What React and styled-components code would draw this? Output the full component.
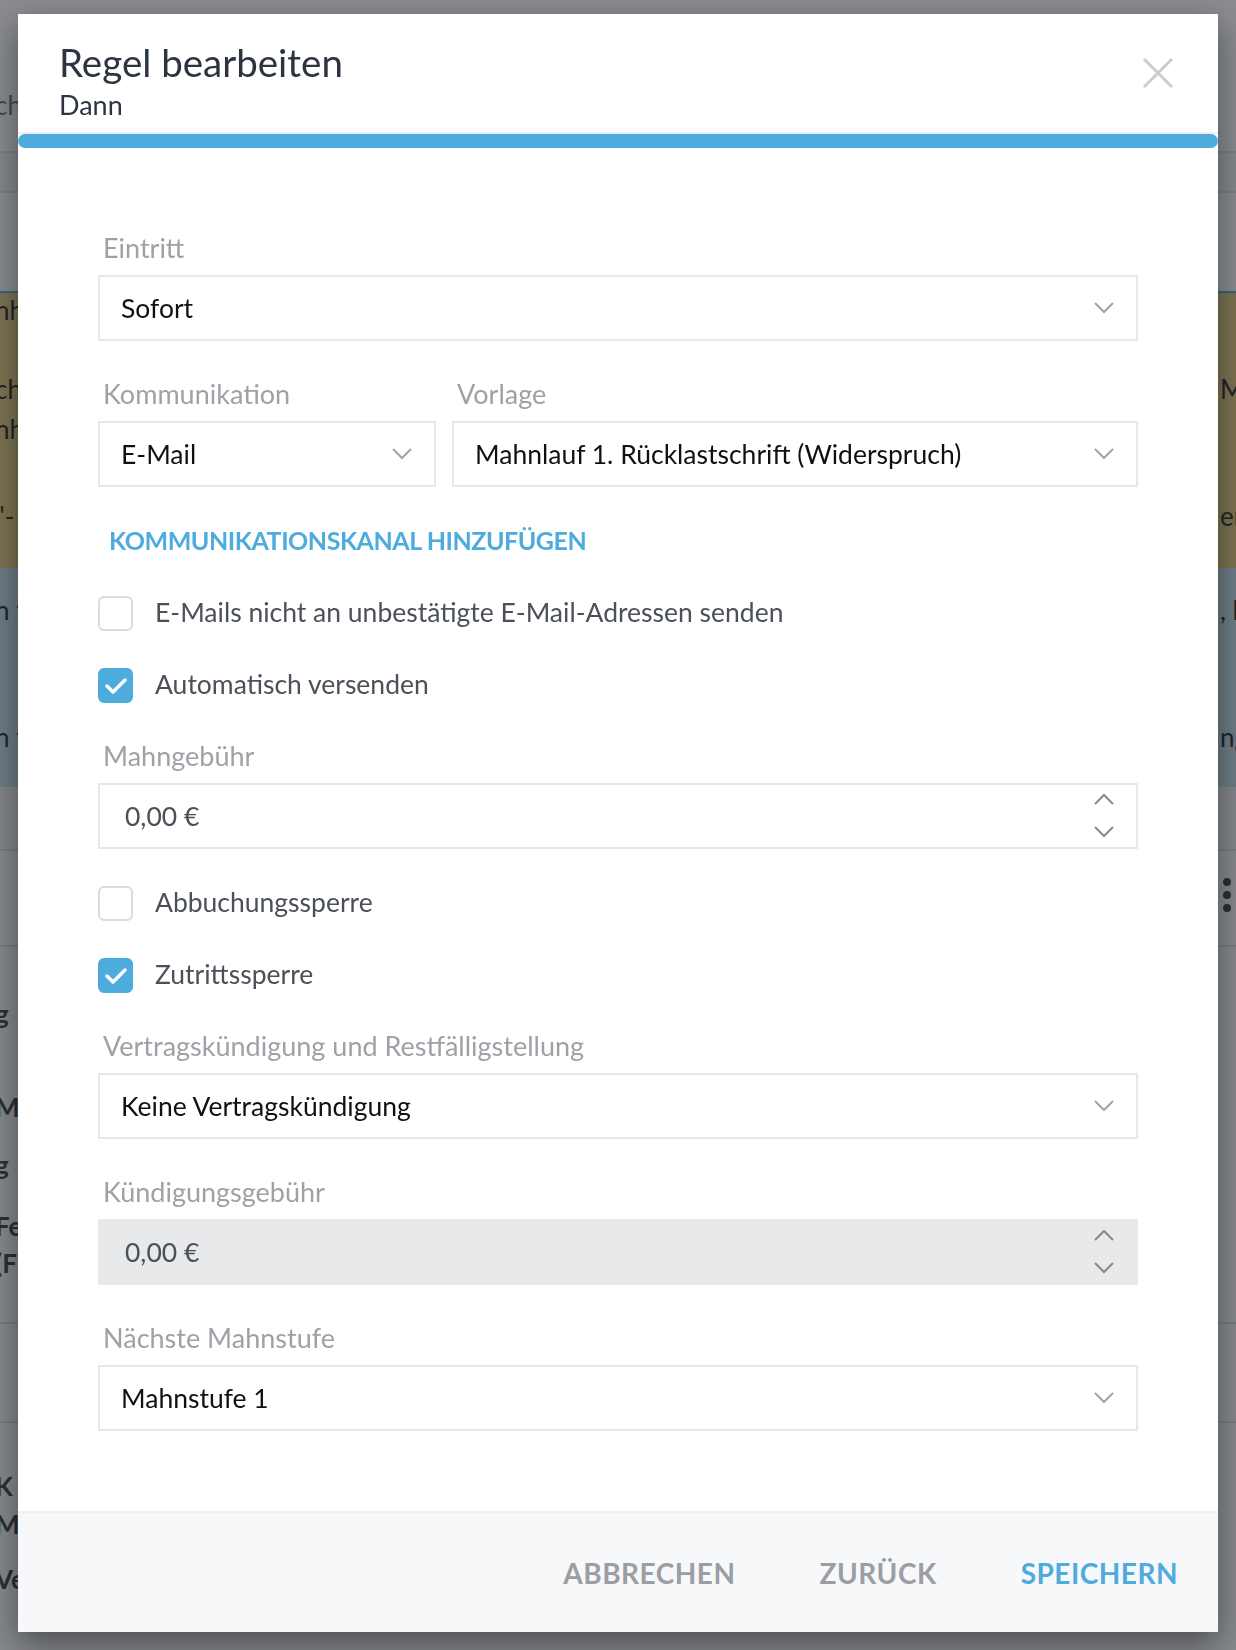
import React from "react";
import styled, { createGlobalStyle } from "styled-components";

const FONT = `"Lato", "Noto Sans", "Liberation Sans", sans-serif`;
const BLUE = "#4eabde";

const GlobalStyle = createGlobalStyle`
  html, body { margin: 0; padding: 0; width: 1236px; height: 1650px; overflow: hidden; }
  body { font-family: ${FONT}; background: #f6f7f9; }
  * { box-sizing: border-box; }
`;

/* ---------- background page (dimmed behind the modal) ---------- */
const BgPage = styled.div`
  width: 1236px;
  height: 1650px;
  display: flex;
  flex-direction: column;
  overflow: hidden;
`;

const BgSection = styled.section`
  flex: 0 0 ${(p) => p.$h}px;
  background: ${(p) => p.$bg};
  border-bottom: ${(p) => (p.$line ? `2px solid ${p.$line}` : "none")};
  display: flex;
  flex-direction: column;
`;

const BgLine = styled.div`
  display: flex;
  align-items: center;
  height: 32px;
  margin-top: ${(p) => p.$mt}px;
  font-size: 26px;
  font-weight: ${(p) => (p.$bold ? 700 : 400)};
  color: ${(p) => p.$color || "#23272d"};
  white-space: nowrap;
`;

const BgLeft = styled.span`
  margin-left: -5px;
`;

const BgRight = styled.span`
  margin-left: auto;
  width: 16px;
  overflow: visible;
`;

const Kebab = styled.svg`
  margin-left: auto;
  margin-right: 4px;
`;

const sections = [
  { h: 153, bg: "#f6f7f9", line: "#d9dce1", lines: [{ y: 105, l: "ch", color: "#6b7078" }] },
  { h: 40, bg: "#eef0f3", line: "#d9dce1", lines: [] },
  { h: 100, bg: "#f6f7f9", line: BLUE, lines: [] },
  {
    h: 275,
    bg: "#dcc67c",
    lines: [
      { y: 310, l: "nh" },
      { y: 389, l: "ch", r: "Ma" },
      { y: 429, l: "nh" },
      { y: 516, l: '"-', r: "en" },
    ],
  },
  {
    h: 219,
    bg: "#bfd9e6",
    lines: [
      { y: 610, l: "n f", r: ", l" },
      { y: 737, l: "n f", r: "ng" },
    ],
  },
  { h: 64, bg: "#eceef1", line: "#d3d6db", lines: [] },
  { h: 96, bg: "#f1f2f4", line: "#d3d6db", lines: [], kebab: true },
  {
    h: 377,
    bg: "#f1f2f4",
    line: "#d3d6db",
    lines: [
      { y: 1014, l: "g", bold: true, color: "#3a3f46" },
      { y: 1107, l: "M", bold: true, color: "#3a3f46" },
      { y: 1165, l: "g", bold: true, color: "#3a3f46" },
      { y: 1226, l: "Fe", bold: true, color: "#3a3f46" },
      { y: 1263, l: "(F", bold: true, color: "#3a3f46" },
    ],
  },
  { h: 99, bg: "#f1f2f4", line: "#d3d6db", lines: [] },
  {
    h: 227,
    bg: "#f1f2f4",
    lines: [
      { y: 1486, l: "K", bold: true, color: "#3a3f46" },
      { y: 1524, l: "M", bold: true, color: "#3a3f46" },
      { y: 1579, l: "Ve", bold: true, color: "#3a3f46" },
    ],
  },
];

function Background() {
  let top = 0;
  return (
    <BgPage>
      {sections.map((s, i) => {
        const start = top;
        top += s.h;
        let cursor = start;
        return (
          <BgSection key={i} $h={s.h} $bg={s.bg} $line={s.line}>
            {s.lines.map((ln, j) => {
              const lineTop = ln.y - 16;
              const mt = lineTop - cursor;
              cursor = lineTop + 32;
              return (
                <BgLine key={j} $mt={mt} $bold={ln.bold} $color={ln.color}>
                  <BgLeft>{ln.l}</BgLeft>
                  {ln.r && <BgRight>{ln.r}</BgRight>}
                </BgLine>
              );
            })}
            {s.kebab && (
              <BgLine $mt={28}>
                <Kebab width="10" height="36" viewBox="0 0 10 36">
                  <circle cx="5" cy="5" r="4" fill="#3a3f46" />
                  <circle cx="5" cy="18" r="4" fill="#3a3f46" />
                  <circle cx="5" cy="31" r="4" fill="#3a3f46" />
                </Kebab>
              </BgLine>
            )}
          </BgSection>
        );
      })}
    </BgPage>
  );
}

/* ---------- modal ---------- */
const Overlay = styled.div`
  position: fixed;
  inset: 0;
  background: rgba(30, 34, 40, 0.5);
  display: flex;
  justify-content: center;
  align-items: flex-start;
  padding-top: 14px;
`;

const Modal = styled.div`
  width: 1200px;
  height: 1618px;
  background: #fff;
  display: flex;
  flex-direction: column;
  box-shadow: 0 12px 32px rgba(0, 0, 0, 0.45);
  font-family: ${FONT};
`;

const Header = styled.header`
  display: flex;
  justify-content: space-between;
  align-items: flex-start;
  padding: 26px 44px 11px 41px;
  border-bottom: 2px solid #eceef1;
`;

const TitleBlock = styled.div`
  display: flex;
  flex-direction: column;
`;

const Title = styled.h1`
  margin: 0;
  font-size: 38.5px;
  line-height: 44px;
  font-weight: 400;
  color: #2b3440;
`;

const Subtitle = styled.div`
  margin-top: 5px;
  font-size: 27px;
  line-height: 32px;
  color: #2b3440;
`;

const CloseButton = styled.button`
  margin-top: 17px;
  width: 32px;
  height: 32px;
  padding: 0;
  border: 0;
  background: none;
  display: flex;
  cursor: pointer;
`;

const ProgressBar = styled.div`
  height: 14px;
  border-radius: 7px;
  background: ${BLUE};
`;

const Body = styled.div`
  flex: 1;
  display: flex;
  flex-direction: column;
  gap: 37px;
  padding: 84px 80px 0;
`;

const Field = styled.div`
  display: flex;
  flex-direction: column;
  min-width: 0;
`;

const Label = styled.label`
  font-size: 27px;
  line-height: 32px;
  color: #9ea1a6;
  padding-left: 5px;
  margin-bottom: 11px;
`;

const Row = styled.div`
  display: grid;
  grid-template-columns: 338px 1fr;
  gap: 16px;
`;

const InputBox = styled.div`
  height: 66px;
  border: 2px solid ${(p) => (p.$disabled ? "#e8e9eb" : "#e8e8e8")};
  background: ${(p) => (p.$disabled ? "#e8e9eb" : "#fff")};
  display: flex;
  align-items: center;
  justify-content: space-between;
  padding: 0 22px 0 ${(p) => (p.$number ? 25 : 21)}px;
  font-size: 26.5px;
  color: ${(p) => (p.$number ? "#4b5059" : "#111")};
  white-space: nowrap;
`;

const Spinner = styled.div`
  display: flex;
  flex-direction: column;
  gap: 21px;
  margin-top: -2px;
`;

const AddLink = styled.a`
  font-size: 25px;
  line-height: 32px;
  font-weight: 700;
  color: ${BLUE};
  text-transform: uppercase;
  padding-left: 11px;
  margin-bottom: 3px;
  letter-spacing: -0.45px;
  cursor: pointer;
`;

const CheckRow = styled.label`
  display: flex;
  align-items: center;
  gap: 22px;
  height: 35px;
  font-size: 26.5px;
  color: #4b5059;
  cursor: pointer;
`;

const CheckText = styled.span`
  margin-top: -3px;
`;

const CheckBox = styled.span`
  width: 35px;
  height: 35px;
  border-radius: 6px;
  border: 2px solid ${(p) => (p.$checked ? BLUE : "#dadbde")};
  background: ${(p) => (p.$checked ? BLUE : "#fff")};
  display: flex;
  align-items: center;
  justify-content: center;
  flex: 0 0 35px;
`;

const Footer = styled.footer`
  flex: 0 0 121px;
  border-top: 2px solid #eef0f2;
  background: #f7f8fa;
  display: flex;
  justify-content: flex-end;
  align-items: center;
  gap: 84px;
  padding: 0 40px 0 0;
`;

const FooterButton = styled.button`
  border: 0;
  background: none;
  padding: 0;
  font-family: ${FONT};
  font-size: 28px;
  font-weight: 700;
  letter-spacing: 0.5px;
  color: ${(p) => (p.$primary ? BLUE : "#9b9ea3")};
  cursor: pointer;
`;

function Chevron({ up, color = "#a3a3a3" }) {
  return (
    <svg width="20" height="12" viewBox="0 0 20 12">
      <path
        d={up ? "M1 11 L10 2 L19 11" : "M1 1 L10 10 L19 1"}
        fill="none"
        stroke={color}
        strokeWidth="2"
      />
    </svg>
  );
}

function Select({ value }) {
  return (
    <InputBox>
      <span>{value}</span>
      <Chevron />
    </InputBox>
  );
}

function NumberInput({ value, disabled }) {
  return (
    <InputBox $number $disabled={disabled}>
      <span>{value}</span>
      <Spinner>
        <Chevron up color="#8a8a8a" />
        <Chevron color="#8a8a8a" />
      </Spinner>
    </InputBox>
  );
}

function Check({ checked, children }) {
  return (
    <CheckRow>
      <CheckBox $checked={checked}>
        {checked && (
          <svg width="24" height="20" viewBox="0 0 24 20">
            <path
              d="M3 10 L9 16 L21 4"
              fill="none"
              stroke="#fff"
              strokeWidth="3.5"
              strokeLinecap="round"
              strokeLinejoin="round"
            />
          </svg>
        )}
      </CheckBox>
      <CheckText>{children}</CheckText>
    </CheckRow>
  );
}

export default function App() {
  return (
    <>
      <GlobalStyle />
      <Background />
      <Overlay>
        <Modal>
          <Header>
            <TitleBlock>
              <Title>Regel bearbeiten</Title>
              <Subtitle>Dann</Subtitle>
            </TitleBlock>
            <CloseButton aria-label="Schließen">
              <svg width="32" height="32" viewBox="0 0 32 32">
                <path d="M2 2 L30 30 M30 2 L2 30" stroke="#cccccc" strokeWidth="3" />
              </svg>
            </CloseButton>
          </Header>
          <ProgressBar />
          <Body>
            <Field>
              <Label>Eintritt</Label>
              <Select value="Sofort" />
            </Field>
            <Row>
              <Field>
                <Label>Kommunikation</Label>
                <Select value="E-Mail" />
              </Field>
              <Field>
                <Label>Vorlage</Label>
                <Select value="Mahnlauf 1. Rücklastschrift (Widerspruch)" />
              </Field>
            </Row>
            <AddLink>Kommunikationskanal hinzufügen</AddLink>
            <Check>E-Mails nicht an unbestätigte E-Mail-Adressen senden</Check>
            <Check checked>Automatisch versenden</Check>
            <Field>
              <Label>Mahngebühr</Label>
              <NumberInput value="0,00 €" />
            </Field>
            <Check>Abbuchungssperre</Check>
            <Check checked>Zutrittssperre</Check>
            <Field>
              <Label>Vertragskündigung und Restfälligstellung</Label>
              <Select value="Keine Vertragskündigung" />
            </Field>
            <Field>
              <Label>Kündigungsgebühr</Label>
              <NumberInput value="0,00 €" disabled />
            </Field>
            <Field>
              <Label>Nächste Mahnstufe</Label>
              <Select value="Mahnstufe 1" />
            </Field>
          </Body>
          <Footer>
            <FooterButton>ABBRECHEN</FooterButton>
            <FooterButton>ZURÜCK</FooterButton>
            <FooterButton $primary>SPEICHERN</FooterButton>
          </Footer>
        </Modal>
      </Overlay>
    </>
  );
}
